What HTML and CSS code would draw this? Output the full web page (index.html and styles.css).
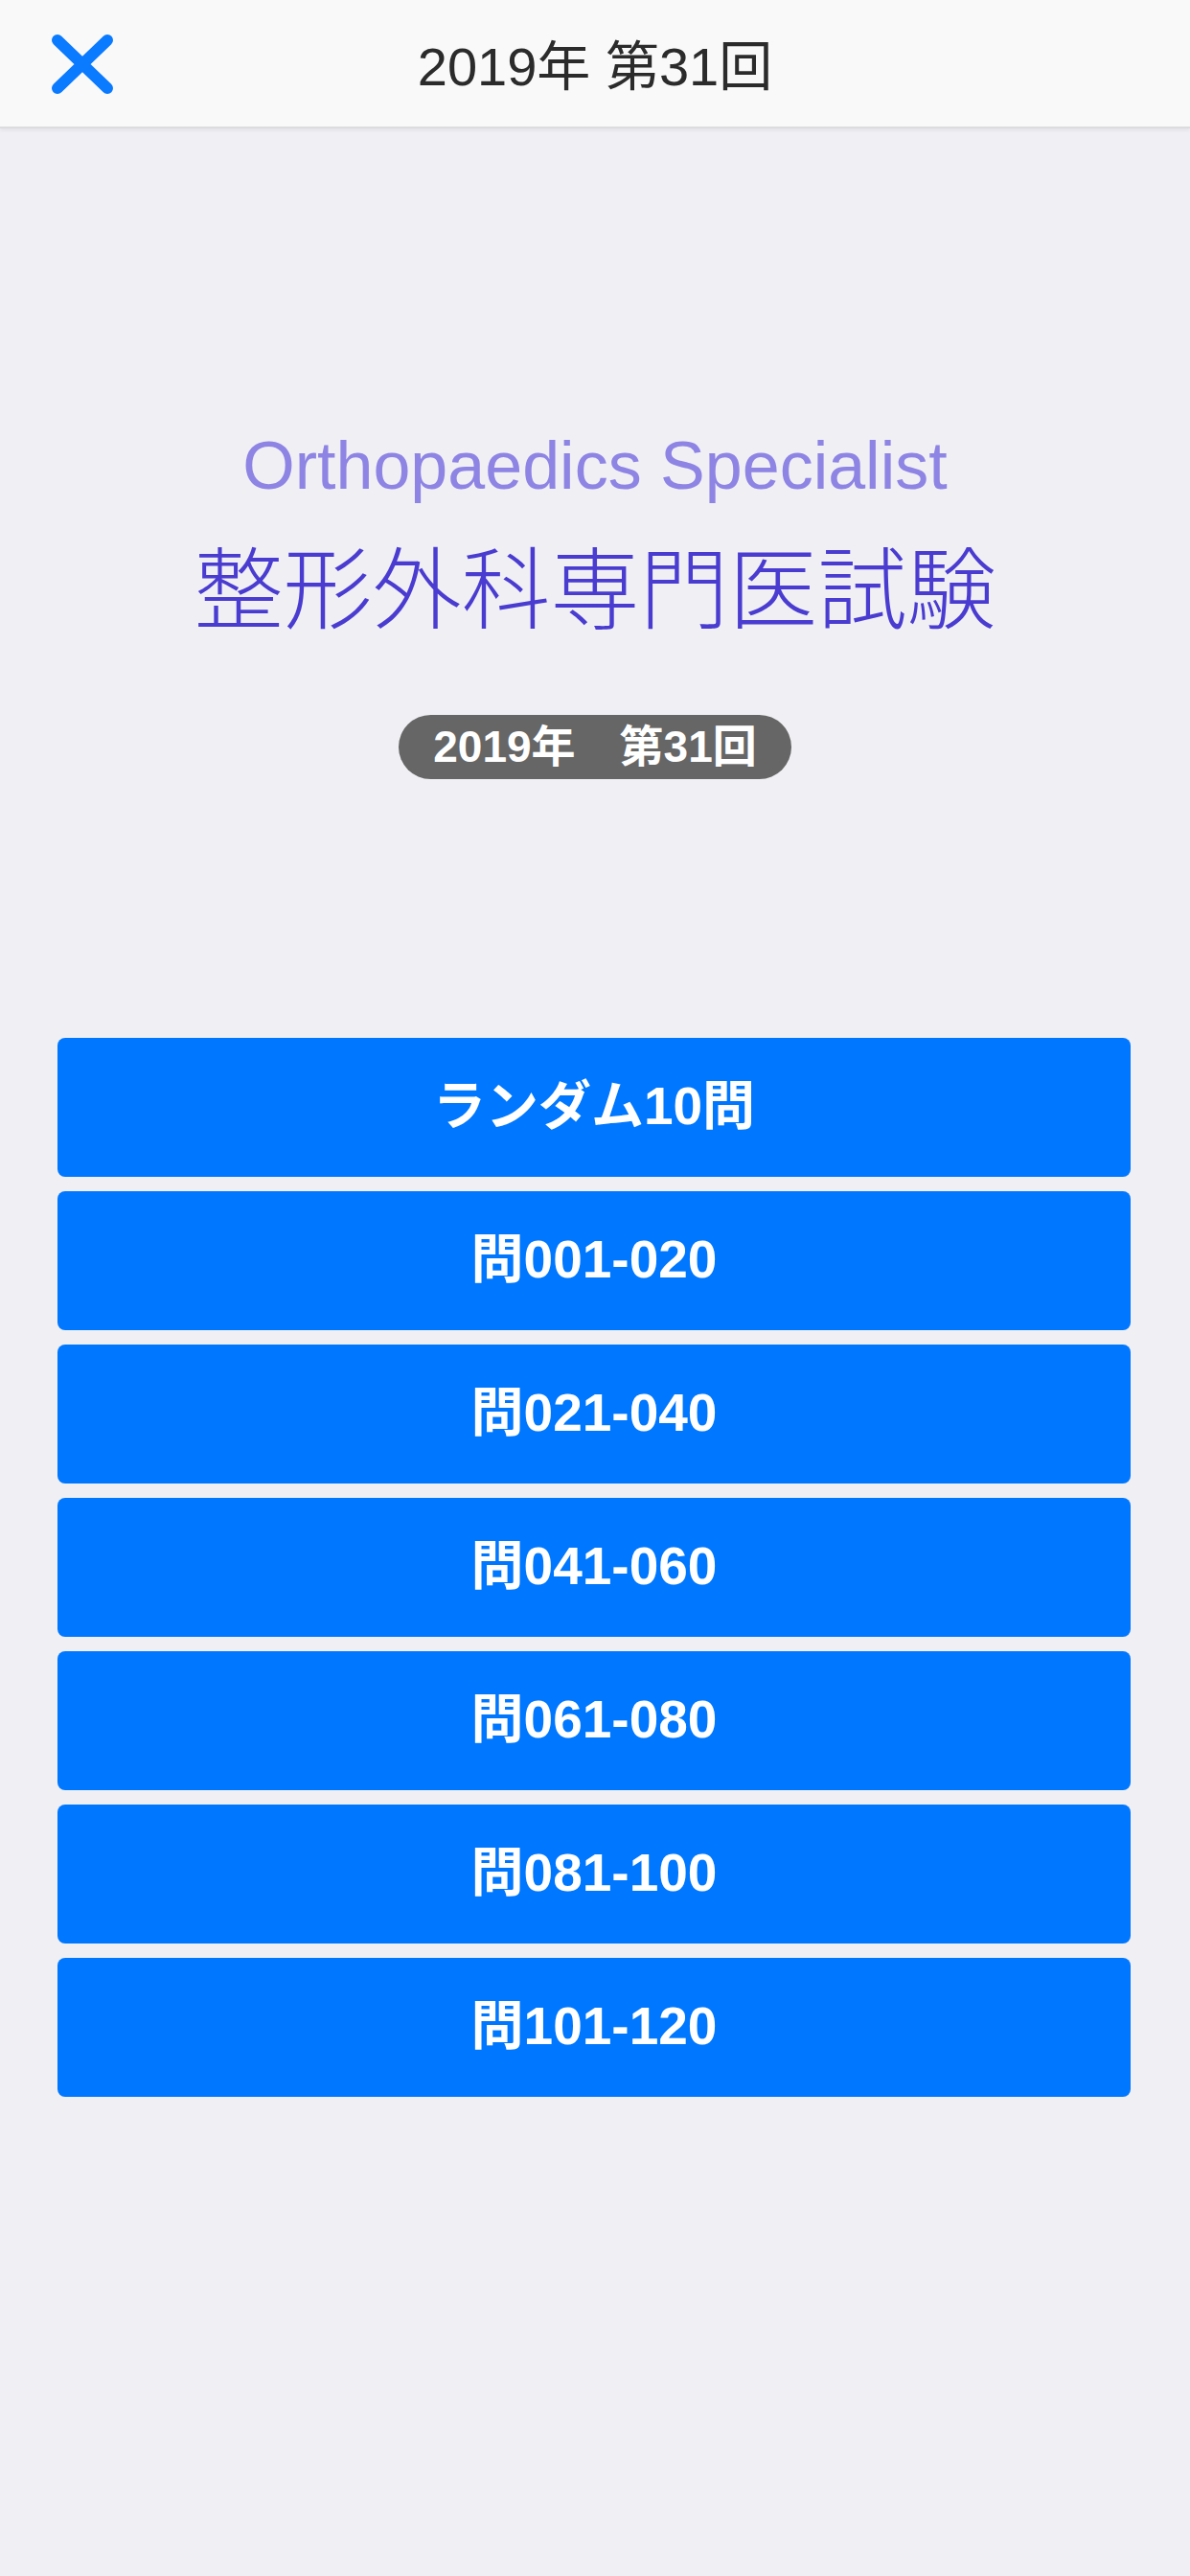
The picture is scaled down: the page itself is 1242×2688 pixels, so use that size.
FILE: index.html
```html
<html lang="ja">
<head>
    <meta charset="UTF-8">
    <meta name="viewport" content="width=device-width, initial-scale=1.0">
    <title>2019年 第31回</title>
    <link rel="stylesheet" href="styles.css">
</head>
<body>
    <header class="nav">
        <button class="nav-close" aria-label="閉じる">
            <svg width="66" height="62" viewBox="0 0 66 62">
                <path d="M7 6 L59 56 M59 6 L7 56" stroke="#0a7aff" stroke-width="12" stroke-linecap="round" fill="none"/>
            </svg>
        </button>
        <div class="nav-title">2019年 第31回</div>
    </header>

    <main>
        <section class="hero">
            <p class="hero-sub">Orthopaedics Specialist</p>
            <h1 class="hero-title">整形外科専門医試験</h1>
            <span class="badge">2019年　第31回</span>
        </section>

        <section class="menu">
            <button class="menu-btn">ランダム10問</button>
            <button class="menu-btn">問001-020</button>
            <button class="menu-btn">問021-040</button>
            <button class="menu-btn">問041-060</button>
            <button class="menu-btn">問061-080</button>
            <button class="menu-btn">問081-100</button>
            <button class="menu-btn">問101-120</button>
        </section>
    </main>
</body>
</html>
```

FILE: styles.css
```css
body {
    font-family: "Liberation Sans", Arial, "Noto Sans CJK JP", sans-serif;
    margin: 0;
    padding: 0;
    background-color: #efeff4;
    min-height: 2688px;
}
.nav {
    position: relative;
    display: flex;
    justify-content: center;
    align-items: center;
    height: 132px;
    background-color: #f9f9f9;
    border-bottom: 2px solid #dcdcdf;
    box-shadow: 0 2px 4px rgba(0, 0, 0, 0.06);
}
.nav-close {
    position: absolute;
    left: 53px;
    top: 36px;
    width: 66px;
    height: 62px;
    padding: 0;
    border: none;
    background: none;
    cursor: pointer;
}
.nav-close svg {
    display: block;
}
.nav-title {
    font-size: 56px;
    color: #2b2b2b;
    margin-top: -4px;
}
.hero {
    text-align: center;
}
.hero-sub {
    margin: 318px 0 0;
    font-size: 70px;
    line-height: 68px;
    font-weight: 300;
    color: #8e84e4;
}
.hero-title {
    margin: 42px 0 0;
    font-family: "Noto Sans CJK JP", sans-serif;
    font-size: 93px;
    line-height: 93px;
    font-weight: 300;
    color: #4a3cd0;
}
.badge {
    display: inline-block;
    margin-top: 91px;
    height: 67px;
    line-height: 67px;
    padding: 0 36px;
    border-radius: 34px;
    background-color: #666;
    color: #fff;
    font-size: 46px;
    font-weight: bold;
}
.menu {
    display: flex;
    flex-direction: column;
    gap: 15px;
    margin: 270px 62px 0 60px;
}
.menu-btn {
    height: 145px;
    padding: 0 0 14px;
    border: none;
    border-radius: 8px;
    background-color: #0077ff;
    color: #fff;
    font-family: "Liberation Sans", Arial, "Noto Sans CJK JP", sans-serif;
    font-size: 55px;
    font-weight: bold;
    cursor: pointer;
}
.menu-btn:hover {
    opacity: 0.9;
}
```
